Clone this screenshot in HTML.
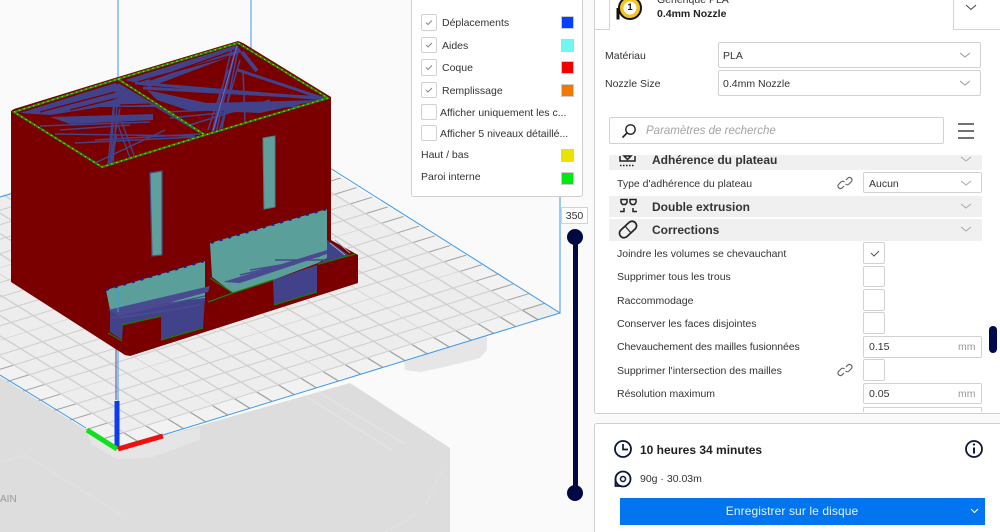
<!DOCTYPE html>
<html lang="fr">
<head>
<meta charset="utf-8">
<title>Cura</title>
<style>
html,body{margin:0;padding:0;background:#fafafa;width:1000px;height:532px;overflow:hidden;}
#w{position:relative;width:1000px;height:532px;overflow:hidden;font-family:"Liberation Sans",sans-serif;font-size:10.5px;color:#333;contain:paint;}
.a{position:absolute;box-sizing:border-box;}
.t{position:absolute;white-space:nowrap;line-height:14px;margin-top:1px;}
.box{position:absolute;box-sizing:border-box;background:#fff;border:1px solid #d2d2d2;border-radius:2px;}
.sw{position:absolute;left:561px;width:11px;height:11px;border:1px solid #ccc;box-sizing:content-box;}
.cat{position:absolute;left:609px;width:373px;background:#f0f0f0;}
.h{position:absolute;left:652px;font-weight:bold;font-size:12px;line-height:16px;color:#333;white-space:nowrap;}
svg{position:absolute;display:block;}
</style>
</head>
<body>
<div id="w">
<svg style="left:0;top:0" width="1000" height="532" viewBox="0 0 1000 532">
<defs>
<pattern id="g" patternUnits="userSpaceOnUse" width="5" height="5" patternTransform="matrix(22.15 -6.8 -15.65 -9.65 117 449)">
<rect width="5" height="5" fill="#ededed"/>
<path d="M0 0V5M1 0V5M2 0V5M3 0V5M4 0V5M0 0H5M0 1H5M0 2H5M0 3H5M0 4H5" stroke="#cecece" stroke-width=".075" fill="none"/>
</pattern>
</defs>
<!-- printer base -->
<path d="M0 375L117 449L350 383L450 448V532H0Z" fill="#dddddd"/>
<path d="M305 396L392 450M318 392L405 444" stroke="#e2e2e2" stroke-width="2" fill="none"/>
<path d="M442 470L425 505M415 515L385 532M0 462L25 455L122 515" stroke="#e1e1e1" stroke-width="1.500" fill="none"/>
<path d="M403 350L487 325V350L480 358L465 362L440 368L420 372L405 370Z" fill="#e6e6e6"/>
<path d="M86 430L92 445L117 459L150 458L200 440V428L163 435L117 449Z" fill="#e5e5e5"/>
<!-- bed -->
<path d="M117 449L560 313L247 120L-196 256Z" fill="url(#g)"/>
<g transform="matrix(22.15 -6.8 -15.65 -9.65 117 449)" fill="none">
<path d="M19 0H20V20H19ZM0 0V1H20V0Z" fill="#f2f2f2"/>
<path d="M0 0H1V20H0Z" fill="#f2f2f2"/>
<path d="M1 0V1M2 0V1M3 0V1M4 0V1M5 0V1M6 0V1M7 0V1M8 0V1M9 0V1M10 0V1M11 0V1M12 0V1M13 0V1M14 0V1M15 0V1M16 0V1M17 0V1M18 0V1M19 0V1M0 1H1M0 2H1M0 3H1M0 4H1M0 5H1M0 6H1M0 7H1M0 8H1M0 9H1M0 10H1M0 11H1M0 12H1M0 13H1M19 1H20M19 2H20M19 3H20M19 4H20M19 5H20M19 6H20M19 7H20M19 8H20M19 9H20M19 10H20M19 11H20M19 12H20M19 13H20M19 14H20" stroke="#a3a3a3" stroke-width=".075"/>
<path d="M1 1V20M19 1V20M1 1H19" stroke="#d2d2d2" stroke-width=".07"/>
</g>
<path d="M163 435L560 313L330 168M0 197L30 188M0 375L86 428" stroke="#3d98ea" stroke-width="1" fill="none"/>
<path d="M118 0V80M251 0V50M560 196V313M118 350V420" stroke="#3d98ea" stroke-width="1" fill="none"/>
<path d="M116 345V400" stroke="#44508c" stroke-width="1" fill="none"/>
<!-- model body -->
<path d="M11 111L14 109L118 77L238 41L243 43L331 97V240L358 255V283L130 356L125 355L11 282Z" fill="#7a0000"/>
<!-- top infill travel lines -->
<path d="M20 113L115 83L160 107L100 107L50 115Z" fill="#42428a"/>
<path d="M125 80L237 45L242 52L150 87Z" fill="#42428a"/>
<path d="M147 90L207 103L320 100L260 113L187 110L157 100Z" fill="#42428a"/>
<path d="M50 117L153 114V120L70 124Z" fill="#42428a"/>
<g fill="none" stroke="#7a0000" stroke-width="1.300">
<path d="M40 112L115 92M70 110L118 98M130 84L230 56M150 80L235 50M170 85L238 62M120 105L155 104"/>
</g>
<g fill="none" stroke="#42428a" stroke-linecap="butt">
<path d="M40 126L150 122M55 134L195 136M75 143L195 137M60 130L130 125M95 140L200 134" stroke-width="1.500"/>
<path d="M118 84L203 134" stroke-width="2"/>
<path d="M116 85L110 165M118 90L113 165M114 100L108 165M121 120L135 158M120 108L112 150M118 125L130 158M95 163L165 130" stroke-width="1.400"/>
<path d="M110 165L116 135" stroke-width="3"/>
<path d="M242 52L257 71" stroke-width="4"/>
<path d="M135 83L325 99M143 88L327 98M238 70L322 98" stroke-width="3"/>
<path d="M170 118L250 110M190 125L270 100M165 112L300 106" stroke-width="1.500"/>
<path d="M232 47L212 133M236 48L216 133M238 50L222 128M228 70L208 130M240 60L219 132M243 70L245 122M234 55L214 130" stroke-width="1.600"/>
<path d="M237 46L213 131" stroke="#6a6ad0" stroke-width="1"/>
</g>
<!-- green edges -->
<g fill="none" stroke-width="2">
<path d="M14 112L118 79L238 43L328 98L205 135L102 167Z M118 79L205 135" stroke="#1d8a00"/>
<path d="M14 112L118 79L238 43L328 98L205 135L102 167Z M118 79L205 135" stroke="#a8d000" stroke-width="1.200" stroke-dasharray="1.500 3.500"/>
</g>
<!-- slots -->
<path d="M150 173L162 171L162 255L152 256Z" fill="#5f9f9c" stroke="#46508e" stroke-width="1.200"/>
<path d="M263 138L275 136L275 207L264 209Z" fill="#5f9f9c" stroke="#4d7e90" stroke-width="1"/>
<!-- lower openings -->
<path d="M210 243L327 209V258L318 263L273 280L233 293L212 277Z" fill="#5b9f9b"/>
<path d="M106 290L205 261V300L110 310Z" fill="#5b9f9b"/>
<path d="M110 310L205 298L203 328L161 340V317L123 325L122 340L110 332Z" fill="#42428a"/>
<path d="M273 280L317 265L317 292L274 305Z" fill="#42428a"/>
<path d="M205 261L210 245V277L233 293L205 302Z" fill="#7a0000"/>
<path d="M327 240L350 256L318 265L327 258Z" fill="#42428a"/>
<path d="M108 310L210 286L208 292L120 316Z" fill="#4a4a90"/>
<path d="M223 282L327 250V254L240 283Z" fill="#4a4a90"/>
<g fill="none" stroke="#4a4a90">
<path d="M120 318L200 305M125 314L205 296M110 318L160 312" stroke-width="1.400"/>
<path d="M275 260L325 260M250 270L300 262M240 275L320 256" stroke-width="1.500"/>
<path d="M330 243L345 255M335 240L350 253" stroke="#9ab" stroke-width="1"/>
</g>
<path d="M210 278L233 293L273 280M318 264L355 254M122 325L161 316M161 340L203 328M274 305L317 292M108 333L122 341M208 302L233 293" stroke="#1d7a00" stroke-width="1.200" fill="none"/>
<path d="M106 290L205 261M211 243L327 209" stroke="#12209a" stroke-width="2" stroke-dasharray="3 6" fill="none"/>
<path d="M118 288V312" stroke="#3d98ea" stroke-width="1"/>
<!-- axes -->
<path d="M117 449V401" stroke="#0a3cf0" stroke-width="5"/>
<path d="M117 449L87 430" stroke="#10e020" stroke-width="5"/>
<path d="M118 449L163 436" stroke="#f01010" stroke-width="5"/>
</svg>

<div class="t" style="left:0;top:492px;color:#9a9a9a;font-size:10px;">AIN</div>

<!-- legend -->
<div class="box" style="left:411px;top:-4px;width:172px;height:201px;border-radius:3px;border-color:#cfcfcf;"></div>
<div class="box" style="left:421px;top:14px;width:16px;height:17px;"></div>
<div class="box" style="left:421px;top:37px;width:16px;height:16px;"></div>
<div class="box" style="left:421px;top:59px;width:16px;height:17px;"></div>
<div class="box" style="left:421px;top:82px;width:16px;height:16px;"></div>
<div class="box" style="left:421px;top:104px;width:16px;height:16px;"></div>
<div class="box" style="left:421px;top:125px;width:16px;height:16px;"></div>
<svg style="left:0;top:0" width="1000" height="532"><path d="M426 22.500l2 2 4-4M426 45l2 2 4-4M426 67.500l2 2 4-4M426 90l2 2 4-4" stroke="#888" stroke-width="1" fill="none"/></svg>
<div class="t" style="left:442px;top:15px;">Déplacements</div>
<div class="t" style="left:442px;top:38px;">Aides</div>
<div class="t" style="left:442px;top:60px;">Coque</div>
<div class="t" style="left:442px;top:83px;">Remplissage</div>
<div class="t" style="left:440px;top:105px;">Afficher uniquement les c...</div>
<div class="t" style="left:440px;top:126px;">Afficher 5 niveaux détaillé...</div>
<div class="t" style="left:421px;top:147px;">Haut / bas</div>
<div class="t" style="left:421px;top:169px;">Paroi interne</div>
<div class="sw" style="top:16px;background:#0540ff;"></div>
<div class="sw" style="top:39px;background:#72f5f5;"></div>
<div class="sw" style="top:61px;background:#f00000;"></div>
<div class="sw" style="top:84px;background:#f27800;"></div>
<div class="sw" style="top:149px;background:#e8e400;"></div>
<div class="sw" style="top:172px;background:#00e812;"></div>

<!-- slider -->
<div class="a" style="left:573px;top:237px;width:5px;height:256px;background:#000a42;"></div>
<div class="a" style="left:567px;top:229px;width:16px;height:16px;border-radius:50%;background:#000a42;"></div>
<div class="a" style="left:567px;top:485px;width:16px;height:16px;border-radius:50%;background:#000a42;"></div>
<div class="box" style="left:561px;top:207px;width:27px;height:17px;border-radius:0;text-align:center;line-height:17px;font-size:10.5px;">350</div>

<!-- right panel -->
<div class="a" style="left:594px;top:-4px;width:410px;height:418px;background:#fff;border:1px solid #cfcfcf;border-radius:3px;"></div>
<svg style="left:0;top:0" width="1000" height="532">
<path d="M594.500 29.500H609.500V0M953.500 0V29.500H1000" stroke="#d4d4d4" fill="none"/>
<path d="M966 5l5 4.500 5-4.500" stroke="#444" fill="none"/>
<path d="M618 19.500V8" stroke="#111" stroke-width="3" fill="none"/>
<circle cx="630" cy="8" r="11" fill="#f3c422" stroke="#111" stroke-width="2"/>
<circle cx="630" cy="8" r="6.500" fill="#fff"/>
</svg>
<div class="t" style="left:657px;top:-8px;">Générique PLA</div>
<div class="t" style="left:625px;top:0;font-weight:bold;font-size:9.500px;color:#111;width:10px;text-align:center;">1</div>
<div class="t" style="left:657px;top:6px;font-weight:bold;color:#222;">0.4mm Nozzle</div>

<div class="t" style="left:605px;top:48px;">Matériau</div>
<div class="t" style="left:605px;top:76px;">Nozzle Size</div>
<div class="box" style="left:718px;top:42px;width:263px;height:26px;"></div>
<div class="box" style="left:718px;top:70px;width:263px;height:26px;"></div>
<div class="t" style="left:723px;top:48px;">PLA</div>
<div class="t" style="left:723px;top:76px;">0.4mm Nozzle</div>

<div class="box" style="left:609px;top:117px;width:335px;height:27px;"></div>
<div class="t" style="left:646px;top:123px;font-style:italic;color:#a3a3a3;font-size:11.500px;">Paramètres de recherche</div>
<svg style="left:0;top:0" width="1000" height="532">
<path d="M960 53l5 4 5-4M960 81l5 4 5-4" stroke="#9a9a9a" fill="none"/>
<circle cx="630.500" cy="129.500" r="4.700" fill="none" stroke="#222" stroke-width="1.400"/>
<path d="M627 133l-4.500 4.500" stroke="#222" stroke-width="1.600"/>
<path d="M958 124h16M958 131h16M958 138h16" stroke="#444" stroke-width="1.500"/>
</svg>

<!-- categories -->
<div class="cat" style="top:155px;height:15px;"></div>
<div class="cat" style="top:196px;height:21px;"></div>
<div class="cat" style="top:219px;height:22px;"></div>
<div class="h" style="top:152px;">Adhérence du plateau</div>
<div class="h" style="top:199px;">Double extrusion</div>
<div class="h" style="top:222px;">Corrections</div>

<div class="t" style="left:617px;top:176px;">Type d'adhérence du plateau</div>
<div class="t" style="left:617px;top:246px;">Joindre les volumes se chevauchant</div>
<div class="t" style="left:617px;top:269px;">Supprimer tous les trous</div>
<div class="t" style="left:617px;top:293px;">Raccommodage</div>
<div class="t" style="left:617px;top:316px;">Conserver les faces disjointes</div>
<div class="t" style="left:617px;top:339px;letter-spacing:-.08px;">Chevauchement des mailles fusionnées</div>
<div class="t" style="left:617px;top:363px;">Supprimer l'intersection des mailles</div>
<div class="t" style="left:617px;top:386px;">Résolution maximum</div>

<div class="box" style="left:863px;top:172px;width:119px;height:21px;"></div>
<div class="t" style="left:869px;top:176px;">Aucun</div>
<div class="box" style="left:863px;top:242px;width:22px;height:22px;"></div>
<div class="box" style="left:863px;top:266px;width:22px;height:21px;"></div>
<div class="box" style="left:863px;top:289px;width:22px;height:22px;"></div>
<div class="box" style="left:863px;top:312px;width:22px;height:22px;"></div>
<div class="box" style="left:863px;top:336px;width:119px;height:22px;"></div>
<div class="box" style="left:863px;top:359px;width:22px;height:22px;"></div>
<div class="box" style="left:863px;top:383px;width:119px;height:21px;"></div>
<div class="a" style="left:863px;top:407px;width:119px;height:5px;border:1px solid #d2d2d2;border-bottom:0;background:#fff;"></div>
<div class="t" style="left:869px;top:339px;">0.15</div>
<div class="t" style="left:869px;top:386px;">0.05</div>
<div class="t" style="left:958px;top:339px;color:#999;">mm</div>
<div class="t" style="left:958px;top:386px;color:#999;">mm</div>
<div class="a" style="left:989px;top:326px;width:8px;height:27px;border-radius:4px;background:#000a4e;"></div>

<svg style="left:0;top:0" width="1000" height="532" fill="none">
<path d="M961 157l5 4 5-4M961 204l5 4 5-4M961 227l5 4 5-4M961 181l5 4 5-4" stroke="#a8a8a8"/>
<path d="M871 253l3 3 5-5" stroke="#555"/>
<!-- adhesion icon -->
<path d="M620 156v5h15v-5M624 156l3.500 3.500L631 156Z" stroke="#222" stroke-width="1.500"/>
<path d="M620 165.500h15" stroke="#222" stroke-width="1.500" stroke-dasharray="1.500 1.500"/>
<!-- dual icon -->
<path d="M621 199.500h6v3l-1.500 2h-3l-1.500-2ZM630 199.500h6v3l-1.500 2h-3l-1.500-2Z" stroke="#222" stroke-width="1.500"/>
<path d="M624 208v3.500h-4M633 208v3.500h4" stroke="#222" stroke-width="1.500"/>
<!-- bandage icon -->
<rect x="618" y="225" width="20" height="9" rx="4.500" transform="rotate(-43 628 229.500)" stroke="#222" stroke-width="1.700"/>
<path d="M625 226l6 7" stroke="#222" stroke-width="1.200"/>
<!-- links -->
<g stroke="#666" stroke-width="1.200">
<path d="M846 180l2-2a2.500 2.500 0 0 1 3.500 3.500l-2.500 2.500a2.500 2.500 0 0 1-3.500 0M844 186l-2 2a2.500 2.500 0 0 1-3.500-3.500l2.500-2.500a2.500 2.500 0 0 1 3.500 0"/>
<path d="M846 367l2-2a2.500 2.500 0 0 1 3.500 3.500l-2.500 2.500a2.500 2.500 0 0 1-3.500 0M844 373l-2 2a2.500 2.500 0 0 1-3.500-3.500l2.500-2.500a2.500 2.500 0 0 1 3.500 0"/>
</g>
</svg>

<!-- bottom panel -->
<div class="a" style="left:594px;top:423px;width:410px;height:115px;background:#fff;border:1px solid #cfcfcf;border-radius:3px;"></div>
<div class="a" style="left:620px;top:498px;width:365px;height:27px;background:#0075ef;"></div>
<svg style="left:0;top:0" width="1000" height="532" fill="none">
<circle cx="623" cy="449" r="8" stroke="#0c1440" stroke-width="1.800"/>
<path d="M623 444v5.500h5" stroke="#0c1440" stroke-width="1.700"/>
<circle cx="974" cy="449" r="8" stroke="#0c1440" stroke-width="1.800"/>
<path d="M974 447.500v6" stroke="#0c1440" stroke-width="2"/>
<circle cx="974" cy="444.500" r="1.100" fill="#0c1440"/>
<circle cx="623" cy="479" r="7.500" stroke="#0c1440" stroke-width="1.800"/>
<circle cx="623" cy="479" r="2.500" stroke="#0c1440" stroke-width="1.500"/>
<path d="M615.500 479v7h6" stroke="#0c1440" stroke-width="1.800"/>
<path d="M971 509l3.500 3.500 3.500-3.500" stroke="#fff" stroke-width="1"/>
</svg>
<div class="t" style="left:640px;top:442px;font-weight:bold;font-size:12px;color:#222;">10 heures 34 minutes</div>
<div class="t" style="left:640px;top:471px;font-size:10.500px;">90g · 30.03m</div>
<div class="t" style="left:620px;top:503px;width:344px;text-align:center;color:#e6f1ff;font-size:12px;letter-spacing:.1px;">Enregistrer sur le disque</div>
</div>
</body>
</html>
